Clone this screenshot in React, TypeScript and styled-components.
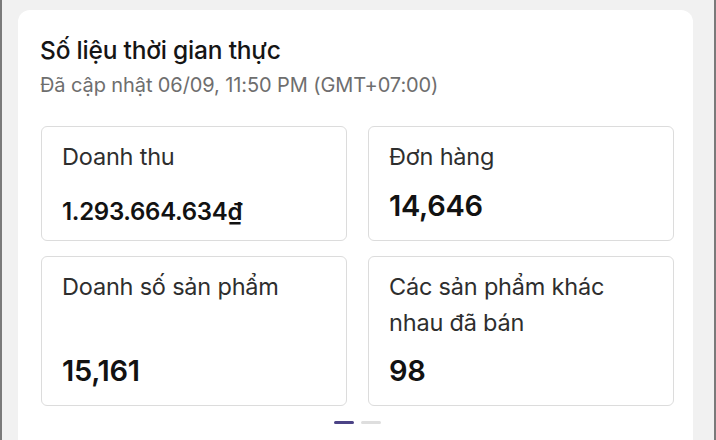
import styled, { createGlobalStyle } from "styled-components";

const GlobalStyle = createGlobalStyle`
  html, body {
    margin: 0;
    background: #f1f1f1;
  }
  body {
    font-family: Inter, "Noto Sans", sans-serif;
  }
`;

type Stat = {
  label: string;
  value: string;
  small?: boolean;
};

const stats: Stat[] = [
  { label: "Doanh thu", value: "1.293.664.634₫", small: true },
  { label: "Đơn hàng", value: "14,646" },
  { label: "Doanh số sản phẩm", value: "15,161" },
  { label: "Các sản phẩm khác nhau đã bán", value: "98" },
];

export default function App() {
  return (
    <>
      <GlobalStyle />
      <Frame>
        <Panel>
          <Title>Số liệu thời gian thực</Title>
          <Updated>Đã cập nhật 06/09, 11:50 PM (GMT+07:00)</Updated>
          <Grid>
            {stats.map((s) => (
              <StatCard key={s.label}>
                <Label>{s.label}</Label>
                <Value $small={s.small}>{s.value}</Value>
              </StatCard>
            ))}
          </Grid>
          <Pager>
            <Dot $active />
            <Dot />
          </Pager>
        </Panel>
      </Frame>
    </>
  );
}

const Frame = styled.div`
  height: 440px;
  box-sizing: border-box;
  border-left: 2px solid #7a7a7a;
  border-right: 2px solid #7a7a7a;
  padding: 10px 21px 0 16px;
  overflow: hidden;
`;

const Panel = styled.div`
  background: #fff;
  border-radius: 12px;
  padding: 24px 19px 40px 22px;
`;

const Title = styled.div`
  font-size: 24.5px;
  line-height: 32px;
  font-weight: 500;
  color: #151515;
  letter-spacing: -0.2px;
`;

const Updated = styled.div`
  margin-top: 8px;
  font-size: 20px;
  line-height: 22px;
  color: #6e6e6e;
  letter-spacing: -0.1px;
`;

const Grid = styled.div`
  margin: 30px 0 0 1px;
  display: grid;
  grid-template-columns: 1fr 1fr;
  grid-template-rows: 115px 150px;
  gap: 15px 21px;
`;

const StatCard = styled.div`
  box-sizing: border-box;
  border: 1.5px solid #dcdcdc;
  border-radius: 6px;
  padding: 12px 20px 18px;
  display: flex;
  flex-direction: column;
`;

const Label = styled.div`
  font-size: 23.5px;
  line-height: 36px;
  color: #2e2e2e;
  letter-spacing: -0.2px;
`;

const Value = styled.div<{ $small?: boolean }>`
  margin-top: auto;
  margin-bottom: ${(p) => (p.$small ? "-6px" : "0")};
  font-size: ${(p) => (p.$small ? "24px" : "29px")};
  line-height: 32px;
  font-weight: 600;
  color: #121212;
  letter-spacing: -0.3px;
`;

const Pager = styled.div`
  display: flex;
  justify-content: center;
  gap: 7px;
  margin-top: 15px;
`;

const Dot = styled.span<{ $active?: boolean }>`
  width: 20px;
  height: 3px;
  border-radius: 2px;
  background: ${(p) => (p.$active ? "#4b4386" : "#dedede")};
`;
